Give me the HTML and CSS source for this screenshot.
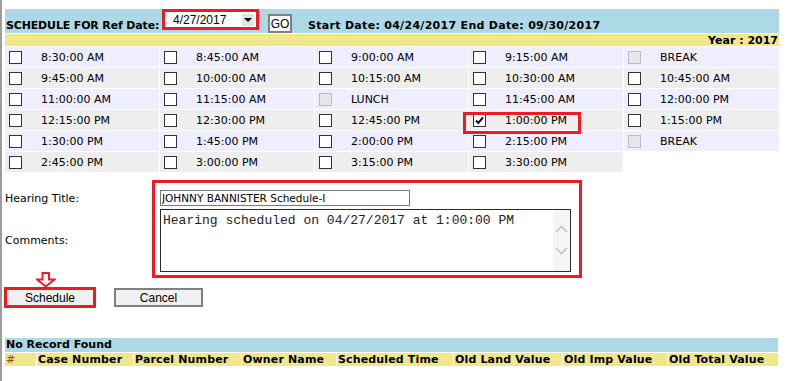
FILE: index.html
```html
<!DOCTYPE html>
<html lang="en">
<head>
  <meta charset="UTF-8">
  <meta name="viewport" content="width=device-width, initial-scale=1.0">
  <title>Schedule Hearing</title>
  <link rel="stylesheet" href="styles.css">
</head>
<body>
<div class="page">

  <!-- ref date bar -->
  <div class="topBar">
    <span class="refLabel">SCHEDULE FOR Ref Date:</span>
    <div class="dateSelect">
      <span class="dateVal">4/27/2017</span>
      <span class="dropBtn"><span class="tri"></span></span>
    </div>
    <button class="goBtn">GO</button>
    <span class="range">Start Date: 04/24/2017 End Date: 09/30/2017</span>
  </div>
  <div class="yearBar">Year : 2017</div>

  <!-- time slots -->
  <table class="slots">
    <colgroup>
      <col style="width:155px"><col style="width:155px"><col style="width:154px"><col style="width:155px"><col style="width:155px">
    </colgroup>
    <tr class="odd">
      <td><div class="cell"><span class="cb"></span><span class="slot">8:30:00 AM</span></div></td>
      <td><div class="cell"><span class="cb"></span><span class="slot">8:45:00 AM</span></div></td>
      <td><div class="cell"><span class="cb"></span><span class="slot">9:00:00 AM</span></div></td>
      <td><div class="cell"><span class="cb"></span><span class="slot">9:15:00 AM</span></div></td>
      <td><div class="cell"><span class="cb off"></span><span class="slot">BREAK</span></div></td>
    </tr>
    <tr class="even">
      <td><div class="cell"><span class="cb"></span><span class="slot">9:45:00 AM</span></div></td>
      <td><div class="cell"><span class="cb"></span><span class="slot">10:00:00 AM</span></div></td>
      <td><div class="cell"><span class="cb"></span><span class="slot">10:15:00 AM</span></div></td>
      <td><div class="cell"><span class="cb"></span><span class="slot">10:30:00 AM</span></div></td>
      <td><div class="cell"><span class="cb"></span><span class="slot">10:45:00 AM</span></div></td>
    </tr>
    <tr class="odd">
      <td><div class="cell"><span class="cb"></span><span class="slot">11:00:00 AM</span></div></td>
      <td><div class="cell"><span class="cb"></span><span class="slot">11:15:00 AM</span></div></td>
      <td><div class="cell"><span class="cb off"></span><span class="slot">LUNCH</span></div></td>
      <td><div class="cell"><span class="cb"></span><span class="slot">11:45:00 AM</span></div></td>
      <td><div class="cell"><span class="cb"></span><span class="slot">12:00:00 PM</span></div></td>
    </tr>
    <tr class="even">
      <td><div class="cell"><span class="cb"></span><span class="slot">12:15:00 PM</span></div></td>
      <td><div class="cell"><span class="cb"></span><span class="slot">12:30:00 PM</span></div></td>
      <td><div class="cell"><span class="cb"></span><span class="slot">12:45:00 PM</span></div></td>
      <td class="picked">
        <div class="cell"><span class="cb on"><svg width="11" height="11" viewBox="0 0 11 11"><path d="M2 5.5 L4.3 8 L9 2.5" fill="none" stroke="#111" stroke-width="2"/></svg></span><span class="slot">1:00:00 PM</span></div>
        <span class="hl"></span>
      </td>
      <td><div class="cell"><span class="cb"></span><span class="slot">1:15:00 PM</span></div></td>
    </tr>
    <tr class="odd">
      <td><div class="cell"><span class="cb"></span><span class="slot">1:30:00 PM</span></div></td>
      <td><div class="cell"><span class="cb"></span><span class="slot">1:45:00 PM</span></div></td>
      <td><div class="cell"><span class="cb"></span><span class="slot">2:00:00 PM</span></div></td>
      <td><div class="cell"><span class="cb"></span><span class="slot">2:15:00 PM</span></div></td>
      <td><div class="cell"><span class="cb off"></span><span class="slot">BREAK</span></div></td>
    </tr>
    <tr class="even">
      <td><div class="cell"><span class="cb"></span><span class="slot">2:45:00 PM</span></div></td>
      <td><div class="cell"><span class="cb"></span><span class="slot">3:00:00 PM</span></div></td>
      <td><div class="cell"><span class="cb"></span><span class="slot">3:15:00 PM</span></div></td>
      <td><div class="cell"><span class="cb"></span><span class="slot">3:30:00 PM</span></div></td>
      <td class="blank"></td>
    </tr>
  </table>

  <!-- hearing form -->
  <div class="hearing">
    <div class="labels">
      <div class="lbl first">Hearing Title:</div>
      <div class="lbl second">Comments:</div>
    </div>
    <div class="formBox">
      <input class="titleInput" type="text" value="JOHNNY BANNISTER Schedule-I">
      <div class="comments">
        <textarea class="commentText">Hearing scheduled on 04/27/2017 at 1:00:00 PM</textarea>
        <div class="scroll">
          <svg width="13" height="8" viewBox="0 0 13 8"><path d="M1 7 L6.5 1.5 L12 7" fill="none" stroke="#c4c4c4" stroke-width="1.6"/></svg>
          <svg width="13" height="8" viewBox="0 0 13 8"><path d="M1 1 L6.5 6.5 L12 1" fill="none" stroke="#c4c4c4" stroke-width="1.6"/></svg>
        </div>
      </div>
    </div>
  </div>

  <div class="actions">
    <svg class="arrow" width="20" height="16" viewBox="0 0 20 16"><path d="M6.5 1 H13 V7.5 H18.5 L9.75 14.5 L1 7.5 H6.5 Z" fill="#fff" stroke="#ed1c24" stroke-width="2"/></svg>
    <button class="btn schedBtn">Schedule</button>
    <button class="btn cancelBtn">Cancel</button>
  </div>

  <!-- scheduled records -->
  <div class="records">
    <div class="noRec">No Record Found</div>
    <table class="recHead">
      <tr>
        <th class="c1 num">#</th>
        <th class="c2">Case Number</th>
        <th class="c3">Parcel Number</th>
        <th class="c4">Owner Name</th>
        <th class="c5">Scheduled Time</th>
        <th class="c6">Old Land Value</th>
        <th class="c7">Old Imp Value</th>
        <th class="c8">Old Total Value</th>
      </tr>
    </table>
  </div>

</div>
</body>
</html>
```

FILE: styles.css
```css
body {
  margin: 0;
  font-family: "DejaVu Sans", Verdana, sans-serif;
  font-size: 11px;
  color: #000;
}
.page {
  min-height: 100vh;
  box-sizing: border-box;
  border-left: 2px solid #9d9d9d;
  padding: 9px 0 0 3px;
}

/* top bar */
.topBar {
  display: flex;
  align-items: flex-start;
  width: 774px;
  height: 24px;
  background: #add8e6;
}
.refLabel {
  flex: none;
  width: 153px;
  white-space: nowrap;
  font-weight: bold;
  line-height: 13px;
  letter-spacing: -0.15px;
  margin: 10px 0 0 1px;
}
.dateSelect {
  flex: none;
  box-sizing: border-box;
  width: 97px;
  height: 21px;
  margin-left: 3px;
  border: 3px solid #ed1c24;
  background: #fff;
  display: flex;
  align-items: center;
}
.dateVal {
  font-family: "Liberation Sans", Arial, sans-serif;
  font-size: 12px;
  margin-left: 8px;
}
.dropBtn {
  margin-left: auto;
  margin-right: 2px;
  width: 12px;
  height: 12px;
  background: #e3e3e3;
  display: flex;
  align-items: center;
  justify-content: center;
}
.tri {
  border-left: 4px solid transparent;
  border-right: 4px solid transparent;
  border-top: 4px solid #000;
}
.goBtn {
  flex: none;
  box-sizing: border-box;
  width: 24px;
  height: 19px;
  margin: 5px 0 0 9px;
  padding: 0;
  border: 2px solid #7f7f7f;
  background: #fff;
  font-family: "Liberation Sans", Arial, sans-serif;
  font-size: 12px;
  color: #000;
}
.range {
  font-weight: bold;
  line-height: 13px;
  letter-spacing: 0.3px;
  white-space: nowrap;
  margin: 10px 0 0 16px;
}
.yearBar {
  width: 773px;
  height: 12px;
  margin-top: 1px;
  padding-right: 1px;
  line-height: 13px;
  background: #f0e68c;
  font-weight: bold;
  text-align: right;
}

/* slots */
.slots {
  margin-top: 1px;
  width: 774px;
  table-layout: fixed;
  border-spacing: 0;
}
.slots td {
  padding: 0;
  height: 20px;
  border-right: 1px solid #fff;
  border-bottom: 1px solid #fff;
  white-space: nowrap;
}
.slots td:last-child {
  border-right: none;
}
.slots tr.odd td {
  background: #eeeeff;
}
.slots tr.even td {
  background: #eeeeee;
}
.slots td.blank {
  background: #fff !important;
}
.cell {
  display: flex;
  align-items: center;
  height: 20px;
}
.cb {
  box-sizing: border-box;
  width: 13px;
  height: 13px;
  margin-left: 4px;
  border: 1px solid #333;
  background: #fff;
  display: flex;
  align-items: center;
  justify-content: center;
}
.cb.off {
  border-color: #bcbcbc;
  background: #e6e6e6;
}
.slot {
  margin-left: 19px;
  line-height: 13px;
  padding-top: 1px;
}
.picked {
  position: relative;
}
.hl {
  position: absolute;
  left: -6px;
  top: 2px;
  width: 118px;
  height: 22px;
  box-sizing: border-box;
  border: 3px solid #ed1c24;
  z-index: 2;
}

/* form */
.hearing {
  display: flex;
  margin-top: 7px;
}
.labels {
  width: 147px;
}
.lbl {
  line-height: 13px;
}
.lbl.first {
  margin-top: 12px;
}
.lbl.second {
  margin-top: 29px;
}
.formBox {
  width: 411px;
  padding: 7px 8px 3px 5px;
  border: 3px solid #ed1c24;
}
.titleInput {
  display: block;
  box-sizing: border-box;
  width: 250px;
  height: 16px;
  margin: 0;
  padding: 0 1px;
  border: 1px solid #7a7a7a;
  font-family: "DejaVu Sans", Verdana, sans-serif;
  font-size: 10.5px;
  color: #000;
}
.comments {
  display: flex;
  box-sizing: border-box;
  width: 411px;
  height: 63px;
  margin-top: 3px;
  border: 1px solid #2b2b2b;
}
.commentText {
  flex: 1;
  margin: 0;
  padding: 3px 2px;
  border: none;
  resize: none;
  overflow: hidden;
  outline: none;
  font-family: "Liberation Mono", "Courier New", monospace;
  font-size: 13px;
  color: #222;
}
.scroll {
  width: 17px;
  background: #f5f5f5;
  display: flex;
  flex-direction: column;
  align-items: center;
  gap: 14px;
  padding-top: 15px;
}

/* buttons */
.actions {
  position: relative;
  display: flex;
  align-items: flex-start;
  margin-top: 9px;
}
.arrow {
  position: absolute;
  left: 31px;
  top: -15px;
}
.btn {
  box-sizing: border-box;
  padding: 0;
  background: #f0f0f0;
  font-family: "Liberation Sans", Arial, sans-serif;
  font-size: 12px;
  color: #000;
}
.schedBtn {
  width: 92px;
  height: 21px;
  margin-left: -1px;
  border: 3px solid #ed1c24;
}
.cancelBtn {
  width: 89px;
  height: 19px;
  margin: 1px 0 0 18px;
  border: 2px solid #7f7f7f;
}

/* records */
.records {
  width: 773px;
  margin-top: 30px;
}
.noRec {
  height: 14px;
  line-height: 14px;
  padding-left: 1px;
  background: #add8e6;
  font-weight: bold;
}
.recHead {
  margin-top: 1px;
  width: 773px;
  table-layout: fixed;
  border-spacing: 0;
}
.recHead th {
  height: 13px;
  padding: 0 0 0 1px;
  line-height: 13px;
  text-align: left;
  white-space: nowrap;
  background: #f0e68c;
  border-right: 1px solid #fff;
  letter-spacing: 0.15px;
}
.recHead th:last-child {
  border-right: none;
}
.recHead .num {
  color: #8b4c1c;
  font-weight: normal;
}
.c1 { width: 30px; }
.c2 { width: 95px; }
.c3 { width: 106px; }
.c4 { width: 93px; }
.c5 { width: 115px; }
.c6 { width: 107px; }
.c7 { width: 103px; }
.c8 { width: 109px; }
```
